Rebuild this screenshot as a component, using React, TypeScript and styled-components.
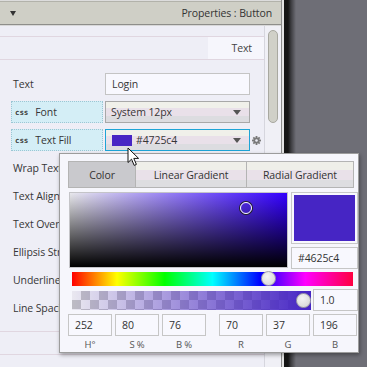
import styled, { createGlobalStyle } from "styled-components";

const GlobalStyle = createGlobalStyle`
  html, body {
    margin: 0;
    padding: 0;
  }
  body {
    font-family: "Open Sans", "Noto Sans", sans-serif;
    font-size: 10.5px;
    letter-spacing: -0.1px;
    color: #363636;
    background: #6e6e76;
  }
  * {
    box-sizing: border-box;
  }
`;

const Screen = styled.div`
  position: relative;
  display: flex;
  width: 367px;
  height: 367px;
  overflow: hidden;
`;

const Panel = styled.div`
  width: 282px;
  display: flex;
  flex-direction: column;
  background: #eeeef6;
  border-right: 1px solid #8c8c8c;
`;

const Divider = styled.div`
  width: 14px;
  background: linear-gradient(
    to right,
    #e4e4e4 0 2px,
    #151515 2px 6px,
    #3c3c40 9px,
    #6e6e76 14px
  );
`;

const Backdrop = styled.div`
  flex: 1;
  background: #6e6e76;
`;

const TopEdge = styled.div`
  height: 2px;
  background: #dcdcdc;
  border-bottom: 1px solid #b2b2aa;
`;

const Header = styled.div`
  height: 23px;
  display: flex;
  align-items: center;
  justify-content: space-between;
  padding: 0 9px 0 10px;
  background: #cfcfc6;
  border-bottom: 1px solid #8e8e8a;
  color: #333;
  font-size: 10.5px;
`;

const Caret = styled.span`
  width: 0;
  height: 0;
  border-left: 3.5px solid transparent;
  border-right: 3.5px solid transparent;
  border-top: 5px solid #333;
`;

const Body = styled.div`
  flex: 1;
  display: flex;
  border-top: 1px solid #d8d8d8;
`;

const Content = styled.div`
  flex: 1;
  display: flex;
  flex-direction: column;
  padding-top: 10px;
`;

const ScrollTrack = styled.div`
  width: 18px;
  padding: 4px 3px 0 3px;
  border-left: 1px solid #d6d6de;
  background: #f0f0f6;
`;

const ScrollThumb = styled.div`
  height: 93px;
  border-radius: 6px;
  border: 1px solid #a8a8a0;
  background: #d0d0c8;
`;

const SectionStrip = styled.div<{ $gap?: number }>`
  height: 24px;
  margin-top: ${(p) => p.$gap ?? 0}px;
  display: flex;
  justify-content: flex-end;
  border-top: 1px solid #e0d6e0;
  border-bottom: 1px solid #e0d6e0;
`;

const SectionTab = styled.div`
  width: 56px;
  padding-right: 12px;
  text-align: right;
  line-height: 22px;
  background: #f6f6fc;
  color: #444;
`;

const Rows = styled.div`
  display: flex;
  flex-direction: column;
  gap: 6px;
  padding: 13px 0 0 11px;
`;

const Row = styled.div`
  height: 22px;
  display: grid;
  grid-template-columns: 92px 145px 12px;
  column-gap: 2px;
  align-items: center;
`;

const Label = styled.div<{ $css?: boolean }>`
  height: 22px;
  display: flex;
  align-items: center;
  white-space: nowrap;
  padding-left: ${(p) => (p.$css ? 3 : 1)}px;
  background: ${(p) => (p.$css ? "#d4eef6" : "transparent")};
  border: 1px dotted ${(p) => (p.$css ? "#9cc6d4" : "transparent")};
`;

const CssBadge = styled.span`
  font-family: "DejaVu Sans Mono", monospace;
  font-size: 7.5px;
  font-weight: bold;
  color: #3a3a3a;
  margin-right: 7px;
`;

const TextBox = styled.div`
  height: 22px;
  display: flex;
  align-items: center;
  padding-left: 6px;
  border: 1px solid #c4c4c4;
  background: #f8f8fe;
`;

const Select = styled.div<{ $focus?: boolean }>`
  height: 22px;
  display: flex;
  align-items: center;
  padding: 0 8px 0 5px;
  border: 1px solid ${(p) => (p.$focus ? "#1ea4d6" : "#a8a8a8")};
  background: linear-gradient(
    #f0f0ea 0 28%,
    #e9e0e9 28% 70%,
    #dcdce0 70%
  );
`;

const SelectText = styled.span`
  flex: 1;
`;

const Arrow = styled.span`
  width: 0;
  height: 0;
  border-left: 4px solid transparent;
  border-right: 4px solid transparent;
  border-top: 5px solid #555;
`;

const Swatch = styled.span`
  width: 20px;
  height: 11px;
  margin: 0 4px 0 1px;
  background: #4725c4;
`;

const Gear = () => (
  <svg width="9" height="9" viewBox="0 0 10 10">
    <g fill="#7a7a7a">
      {[0, 45, 90, 135].map((a) => (
        <rect key={a} x="4" y="0" width="2" height="10" transform={`rotate(${a} 5 5)`} />
      ))}
      <circle cx="5" cy="5" r="3.4" />
    </g>
    <circle cx="5" cy="5" r="1.4" fill="#eeeef6" />
  </svg>
);

/* colour picker popup */

const Popup = styled.div`
  position: absolute;
  left: 59px;
  top: 153px;
  width: 300px;
  height: 200px;
  padding: 7px 0 0 8px;
  display: flex;
  flex-direction: column;
  background: #f6f6fc;
  border: 1px solid #9c9c9c;
  box-shadow: 1px 2px 4px rgba(0, 0, 0, 0.35);
`;

const PickerTabs = styled.div`
  width: 286px;
  height: 27px;
  display: flex;
  border: 1px solid #b4b4b4;
`;

const PickerTab = styled.div<{ $w?: number; $active?: boolean }>`
  ${(p) => (p.$w ? `width: ${p.$w}px;` : "flex: 1;")}
  display: flex;
  align-items: center;
  justify-content: center;
  color: #333;
  & + & {
    border-left: 1px solid #b4b4b4;
  }
  background: ${(p) =>
    p.$active
      ? "#c9c9cd"
      : "linear-gradient(#efefe9 0 30%, #e9e1e9 30% 70%, #dddde0 70%)"};
`;

const MainRow = styled.div`
  display: flex;
  gap: 3px;
  margin: 4px 0 0 1px;
`;

const Field = styled.div`
  position: relative;
  width: 219px;
  height: 76px;
  border: 1px solid #c4c4c8;
  background: linear-gradient(to bottom, rgba(0, 0, 0, 0), #000),
    linear-gradient(to right, #e8e8ec, hsl(252, 100%, 50%));
`;

const FieldMarker = styled.div`
  position: absolute;
  left: 170px;
  top: 9px;
  width: 12px;
  height: 12px;
  border-radius: 50%;
  border: 1.5px solid #fff;
  box-shadow: 0 0 0 1px #222;
`;

const SideCol = styled.div`
  width: 67px;
  display: flex;
  flex-direction: column;
  gap: 3px;
`;

const Preview = styled.div`
  height: 52px;
  padding: 2px;
  border: 1px solid #c8c8c8;
  background: #f8f8fe;
`;

const PreviewFill = styled.div`
  height: 100%;
  background: #4625c4;
`;

const Field2 = styled.div<{ $w?: number }>`
  ${(p) => (p.$w ? `width: ${p.$w}px;` : "")}
  height: 22px;
  display: flex;
  align-items: center;
  padding-left: 6px;
  border: 1px solid #c6c6c6;
  background: #f8f8fe;
  color: #333;
`;

const HueBar = styled.div`
  position: relative;
  width: 281px;
  height: 14px;
  margin: 3px 0 0 4px;
  background: linear-gradient(
    to right,
    #ff0000 0%,
    #ffff00 16%,
    #00ff00 33%,
    #00ffff 50%,
    #0000ff 67%,
    #ff00ff 83%,
    #ff0040 100%
  );
`;

const Knob = styled.div<{ $left: number; $top: number }>`
  position: absolute;
  left: ${(p) => p.$left}px;
  top: ${(p) => p.$top}px;
  width: 15px;
  height: 15px;
  border-radius: 50%;
  border: 1px solid #a4a4a4;
  background: radial-gradient(circle at 40% 35%, #f4f4f4, #d2d2d2);
`;

const AlphaRow = styled.div`
  display: flex;
  align-items: center;
  gap: 2px;
  margin: 3px 0 0 4px;
`;

const AlphaBar = styled.div`
  position: relative;
  width: 239px;
  height: 19px;
  background: linear-gradient(to right, rgba(70, 37, 196, 0.05), rgba(70, 37, 196, 1)),
    repeating-conic-gradient(#c4c4c4 0 25%, #f2f2f2 0 50%) 0 0 / 18px 18px;
`;

const FieldsGrid = styled.div`
  display: grid;
  grid-template-columns: repeat(3, 44px) 7px repeat(3, 44px);
  column-gap: 3px;
  margin-top: 3px;
`;

const Spacer = styled.div``;

const Caption = styled.div`
  text-align: center;
  font-size: 9.5px;
  color: #555;
  margin-top: 2px;
`;

const Pointer = styled.svg`
  position: absolute;
  left: 127px;
  top: 147px;
`;

const rows: { label: string }[] = [
  { label: "Wrap Text" },
  { label: "Text Alignment" },
  { label: "Text Overrun" },
  { label: "Ellipsis String" },
  { label: "Underline" },
  { label: "Line Spacing" },
];

const hsb = ["252", "80", "76"];
const rgb = ["70", "37", "196"];

export default function App() {
  return (
    <Screen>
      <GlobalStyle />
      <Panel>
        <TopEdge />
        <Header>
          <Caret />
          <span>Properties : Button</span>
        </Header>
        <Body>
          <Content>
            <SectionStrip>
              <SectionTab>Text</SectionTab>
            </SectionStrip>
            <Rows>
              <Row>
                <Label>Text</Label>
                <TextBox>Login</TextBox>
              </Row>
              <Row>
                <Label $css>
                  <CssBadge>css</CssBadge>Font
                </Label>
                <Select>
                  <SelectText>System 12px</SelectText>
                  <Arrow />
                </Select>
              </Row>
              <Row>
                <Label $css>
                  <CssBadge>css</CssBadge>Text Fill
                </Label>
                <Select $focus>
                  <Swatch />
                  <SelectText>#4725c4</SelectText>
                  <Arrow />
                </Select>
                <Gear />
              </Row>
              {rows.map((r) => (
                <Row key={r.label}>
                  <Label>{r.label}</Label>
                </Row>
              ))}
            </Rows>
            <SectionStrip $gap={12} />
          </Content>
          <ScrollTrack>
            <ScrollThumb />
          </ScrollTrack>
        </Body>
      </Panel>
      <Divider />
      <Backdrop />

      <Popup>
        <PickerTabs>
          <PickerTab $w={66} $active>
            Color
          </PickerTab>
          <PickerTab $w={111}>Linear Gradient</PickerTab>
          <PickerTab>Radial Gradient</PickerTab>
        </PickerTabs>
        <MainRow>
          <Field>
            <FieldMarker />
          </Field>
          <SideCol>
            <Preview>
              <PreviewFill />
            </Preview>
            <Field2>#4625c4</Field2>
          </SideCol>
        </MainRow>
        <HueBar>
          <Knob $left={189} $top={-1} />
        </HueBar>
        <AlphaRow>
          <AlphaBar>
            <Knob $left={224} $top={2} />
          </AlphaBar>
          <Field2 $w={45}>1.0</Field2>
        </AlphaRow>
        <FieldsGrid>
          {hsb.map((v) => (
            <Field2 key={"h" + v}>{v}</Field2>
          ))}
          <Spacer />
          {rgb.map((v) => (
            <Field2 key={"r" + v}>{v}</Field2>
          ))}
          <Caption>H°</Caption>
          <Caption>S %</Caption>
          <Caption>B %</Caption>
          <Spacer />
          <Caption>R</Caption>
          <Caption>G</Caption>
          <Caption>B</Caption>
        </FieldsGrid>
      </Popup>

      <Pointer width="13" height="20" viewBox="0 0 13 20">
        <path
          d="M1 1 L1 15.5 L4.5 12.2 L7.2 18.4 L9.4 17.4 L6.8 11.4 L11.6 11.4 Z"
          fill="#fff"
          stroke="#111"
          strokeWidth="1"
          strokeLinejoin="round"
        />
      </Pointer>
    </Screen>
  );
}
